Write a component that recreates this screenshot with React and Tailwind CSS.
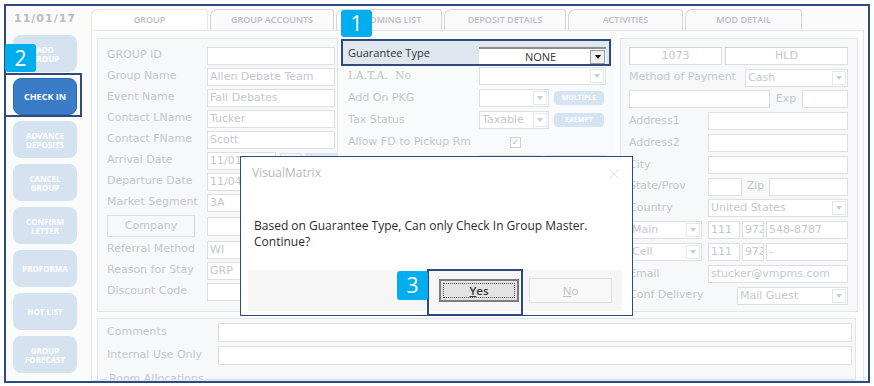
import React from "react";

const TXT = "text-[#c4c7cb]";

function Tri({ dark }) {
  return (
    <span
      className={`w-0 h-0 border-l-[3px] border-r-[3px] border-t-[4px] border-l-transparent border-r-transparent ${
        dark ? "border-t-[#111]" : "border-t-[#c9ccd0]"
      }`}
    />
  );
}

function Inp({ className = "", children, center }) {
  return (
    <div
      className={`h-[18px] shrink-0 bg-white border border-[#dcdfe3] ${TXT} text-[11px] leading-[16px] px-[2px] overflow-hidden whitespace-nowrap ${
        center ? "text-center" : ""
      } ${className}`}
    >
      {children}
    </div>
  );
}

function Sel({ className = "", children }) {
  return (
    <div className={`h-[18px] shrink-0 bg-white border border-[#dcdfe3] flex ${className}`}>
      <span className={`flex-1 px-[2px] text-[11px] leading-[16px] ${TXT} overflow-hidden whitespace-nowrap`}>
        {children}
      </span>
      <span className="w-[14px] my-[1px] mr-[1px] border border-[#e6e8eb] flex items-center justify-center">
        <Tri />
      </span>
    </div>
  );
}

function Pill({ children }) {
  return (
    <div className="ml-[5px] w-[50px] h-[14px] rounded-[4px] bg-[#d5e4f3] text-white text-[7px] font-bold font-['Open_Sans',sans-serif] flex items-center justify-center">
      {children}
    </div>
  );
}

function Label({ className = "", children }) {
  return <div className={`shrink-0 ${TXT} text-[11px] whitespace-nowrap ${className}`}>{children}</div>;
}

function SideBtn({ children, active }) {
  return (
    <div
      className={`w-[64px] h-[37px] rounded-[8px] flex items-center justify-center text-center text-white font-bold text-[8px] leading-[9px] font-['Open_Sans',sans-serif] ${
        active ? "bg-[#3b7cc7] border border-[#2f68ad] text-[9px]" : "bg-[#d5e3f1]"
      }`}
    >
      {children}
    </div>
  );
}

function Tab({ children, className = "", active }) {
  return (
    <div
      className={`h-[21px] shrink-0 rounded-tl-[7px] rounded-tr-[3px] border border-b-0 flex items-center justify-center text-[9px] font-semibold text-[#b9bdc4] font-['Open_Sans',sans-serif] ${
        active ? "bg-white border-[#eee7d2]" : "bg-[#fafafa] border-[#d9d9d3]"
      } ${className}`}
    >
      {children}
    </div>
  );
}

function Badge({ n, className }) {
  return (
    <div
      className={`absolute rounded-[3px] bg-[#00aeef] text-white text-[21px] leading-none flex items-center justify-center font-['Open_Sans',sans-serif] ${className}`}
    >
      {n}
    </div>
  );
}

export default function App() {
  const leftRows = [
    ["GROUP ID", ""],
    ["Group Name", "Allen Debate Team"],
    ["Event Name", "Fall Debates"],
    ["Contact LName", "Tucker"],
    ["Contact FName", "Scott"],
  ];
  return (
    <div className="relative w-[874px] h-[386px] bg-white pl-[4px] pt-[4px] pr-[4px] pb-[3px] font-['DejaVu_Sans',sans-serif] overflow-hidden">
      <div className="h-full border-2 border-[#2e4a7e] bg-[#fbfbfb] flex">
        {/* Sidebar */}
        <div className="w-[82px] shrink-0 pl-[7px] pt-[6px] flex flex-col">
          <div className="w-[64px] h-[14px] text-center text-[11px] leading-[14px] font-bold tracking-[1px] text-[#b7bcc5] font-['DejaVu_Sans',sans-serif]">
            11/01/17
          </div>
          <div className="mt-[9px] flex flex-col gap-[6px]">
            <SideBtn>ADD<br />GROUP</SideBtn>
            <SideBtn active>CHECK IN</SideBtn>
            <SideBtn>ADVANCE<br />DEPOSITS</SideBtn>
            <SideBtn>CANCEL<br />GROUP</SideBtn>
            <SideBtn>CONFIRM<br />LETTER</SideBtn>
            <SideBtn>PROFORMA</SideBtn>
            <SideBtn>HOT LIST</SideBtn>
            <SideBtn>GROUP<br />FORECAST</SideBtn>
          </div>
        </div>

        {/* Main */}
        <div className="flex-1 min-w-0 flex flex-col pl-[3px] pr-[4px] pt-[3px]">
          <div className="h-[21px] flex gap-[2px] shrink-0">
            <Tab active className="w-[117px]">GROUP</Tab>
            <Tab className="w-[124px]">GROUP ACCOUNTS</Tab>
            <Tab className="w-[106px]">ROOMING LIST</Tab>
            <Tab className="w-[122px]">DEPOSIT DETAILS</Tab>
            <Tab className="w-[115px]">ACTIVITIES</Tab>
            <Tab className="w-[117px]">MOD DETAIL</Tab>
          </div>
          <div className="flex-1 min-h-0 overflow-hidden border border-[#e2e5e9] bg-[#fbfcfd] pl-[5px] pr-[3px] pt-[7px]">
            <div className="h-[274px] flex">
              {/* Left box */}
              <div className="w-[241px] shrink-0 border border-[#e1e4e8] bg-[#f6f8fa] pl-[9px] pt-[6px] overflow-hidden">
                {leftRows.map(([l, v]) => (
                  <div key={l} className="h-[21px] flex items-center">
                    <Label className="w-[100px]">{l}</Label>
                    <Inp className="w-[128px]">{v}</Inp>
                  </div>
                ))}
                <div className="h-[21px] flex items-center">
                  <Label className="w-[100px]">Arrival Date</Label>
                  <Inp className="w-[69px]">11/01/17</Inp>
                  <div className="ml-[4px] w-[22px] h-[16px] border border-[#dcdfe3] bg-[#f4f5f6]" />
                  <div className="ml-[3px] w-[32px] h-[16px] bg-[#d8e6f3]" />
                </div>
                <div className="h-[21px] flex items-center">
                  <Label className="w-[100px]">Departure Date</Label>
                  <Inp className="w-[69px]">11/04/17</Inp>
                </div>
                <div className="h-[21px] flex items-center">
                  <Label className="w-[100px]">Market Segment</Label>
                  <Inp className="w-[128px]">3A</Inp>
                </div>
                <div className="h-[26px] flex items-center">
                  <div className={`w-[88px] h-[22px] border border-[#dcdfe3] border-r-[#cfd2d6] bg-[#f7f8f9] ${TXT} text-[11px] flex items-center justify-center`}>
                    Company
                  </div>
                  <Inp className="ml-[12px] w-[128px] h-[19px]"></Inp>
                </div>
                <div className="h-[21px] flex items-center">
                  <Label className="w-[100px]">Referral Method</Label>
                  <Inp className="w-[128px]">WI</Inp>
                </div>
                <div className="h-[21px] flex items-center">
                  <Label className="w-[100px]">Reason for Stay</Label>
                  <Inp className="w-[128px]">GRP</Inp>
                </div>
                <div className="h-[21px] flex items-center">
                  <Label className="w-[100px]">Discount Code</Label>
                  <Inp className="w-[128px]"></Inp>
                </div>
              </div>

              {/* Middle */}
              <div className="ml-[4px] w-[272px] shrink-0 bg-[#f8fafc] pt-[3px]">
                <div className="h-[24px] w-[267px] bg-[#e1e7ef] flex items-end">
                  <div className="self-center pl-[6px] w-[137px] text-[11px] text-[#333] font-['Open_Sans',sans-serif]">
                    Guarantee Type
                  </div>
                  <div className="w-[127px] h-[18px] bg-white border-t-2 border-[#8d8d8d] flex">
                    <span className="flex-1 text-center text-[11px] leading-[16px] text-[#333] font-['Open_Sans',sans-serif] pl-[12px]">
                      NONE
                    </span>
                    <span className="w-[15px] h-[14px] mt-[1px] mr-[1px] border border-[#9a9a9a] bg-[#efefef] flex items-center justify-center">
                      <Tri dark />
                    </span>
                  </div>
                </div>
                <div className="pl-[6px]">
                  <div className="h-[22px] flex items-center">
                    <Label className="w-[131px] font-['DejaVu_Serif',serif]">I.A.T.A.&nbsp; No</Label>
                    <Sel className="w-[127px]" />
                  </div>
                  <div className="h-[22px] flex items-center">
                    <Label className="w-[131px]">Add On PKG</Label>
                    <Sel className="w-[70px]" />
                    <Pill>MULTIPLE</Pill>
                  </div>
                  <div className="h-[22px] flex items-center">
                    <Label className="w-[131px]">Tax Status</Label>
                    <Sel className="w-[70px]">Taxable</Sel>
                    <Pill>EXEMPT</Pill>
                  </div>
                  <div className="h-[22px] flex items-center">
                    <Label className="w-[162px]">Allow FD to Pickup Rm</Label>
                    <div className="w-[11px] h-[11px] border border-[#cfd2d6] bg-white text-[9px] leading-[9px] text-[#b8bbbf] flex items-center justify-center">
                      ✓
                    </div>
                  </div>
                  <div className="h-[22px] flex items-center">
                    <div className="w-[131px]" />
                    <Inp className="w-[62px]"></Inp>
                    <Inp className="ml-[4px] w-[62px]"></Inp>
                  </div>
                </div>
              </div>

              {/* Right box */}
              <div className="ml-[6px] w-[238px] shrink-0 border border-[#e1e4e8] bg-[#f6f8fa] pl-[8px] pr-[9px] pt-[6px]">
                <div className="h-[21.8px] flex items-center gap-[3px]">
                  <Inp center className="w-[93px] border-t-[#cfd2d6] border-l-[#cfd2d6]">1073</Inp>
                  <Inp center className="w-[123px] border-t-[#cfd2d6] border-l-[#cfd2d6]">HLD</Inp>
                </div>
                <div className="h-[21.8px] flex items-center justify-between">
                  <Label>Method of Payment</Label>
                  <Sel className="w-[103px]">Cash</Sel>
                </div>
                <div className="h-[21.8px] flex items-center">
                  <Inp className="w-[141px]"></Inp>
                  <Label className="w-[32px] text-center">Exp</Label>
                  <Inp className="w-[46px]"></Inp>
                </div>
                {["Address1", "Address2", "City"].map((l) => (
                  <div key={l} className="h-[21.8px] flex items-center justify-between">
                    <Label>{l}</Label>
                    <Inp className="w-[140px]"></Inp>
                  </div>
                ))}
                <div className="h-[21.8px] flex items-center">
                  <Label className="w-[79px]">State/Prov</Label>
                  <Inp className="w-[34px]"></Inp>
                  <Label className="w-[27px] text-center">Zip</Label>
                  <Inp className="w-[79px]"></Inp>
                </div>
                <div className="h-[21.8px] flex items-center justify-between">
                  <Label>Country</Label>
                  <Sel className="w-[140px]">United States</Sel>
                </div>
                {[["Main", "548-8787"], ["Cell", "-"]].map(([t, n]) => (
                  <div key={t} className="h-[21.8px] flex items-center">
                    <Sel className="w-[73px]">{t}</Sel>
                    <Inp className="ml-[6px] w-[32px] text-[10.5px]">111</Inp>
                    <Inp className="ml-[2px] w-[22px] px-[1px] text-[10px] tracking-[-0.3px]">972</Inp>
                    <Inp className="ml-[2px] w-[82px] text-[10.5px]">{n}</Inp>
                  </div>
                ))}
                <div className="h-[21.8px] flex items-center justify-between">
                  <Label>Email</Label>
                  <Inp className="w-[140px]">stucker@vmpms.com</Inp>
                </div>
                <div className="h-[21.8px] flex items-center justify-between">
                  <Label>Conf Delivery</Label>
                  <Sel className="w-[111px]">Mail Guest</Sel>
                </div>
              </div>
            </div>

            {/* Bottom box */}
            <div className="mt-[6px] w-[759px] border border-[#e1e4e8] bg-[#f6f8fa] pl-[9px] pt-[2px]">
              <div className="h-[23px] flex items-center">
                <Label className="w-[111px]">Comments</Label>
                <Inp className="w-[634px] h-[19px]"></Inp>
              </div>
              <div className="h-[23px] flex items-center">
                <Label className="w-[111px]">Internal Use Only</Label>
                <Inp className="w-[634px] h-[19px]"></Inp>
              </div>
              <div className="mt-[4px] ml-[-7px] flex items-start">
                <div className="w-[7px] mt-[8px] border-t border-[#dadde1]" />
                <Label className="px-[2px]">Room Allocations</Label>
                <div className="flex-1 mt-[8px] border-t border-[#dadde1]" />
              </div>
            </div>
          </div>
        </div>
      </div>

      {/* Dialog */}
      <div className="absolute left-[240px] top-[156px] w-[393px] h-[160px] border-[1.5px] border-[#2e4a7e] bg-white flex flex-col font-['Open_Sans',sans-serif]">
        <div className="pl-[11px] pt-[8px] h-[26px] text-[12px] leading-[16px] text-[#b8b8b8]">VisualMatrix</div>
        <svg className="absolute right-[12px] top-[11px]" width="12" height="12" viewBox="0 0 12 12">
          <path d="M1 1L11 11M11 1L1 11" stroke="#e2e2e2" strokeWidth="1" />
        </svg>
        <div className="pl-[13px] mt-[35px] text-[12px] leading-[16px] text-[#2b2b2b]">
          Based on Guarantee Type, Can only Check In Group Master.
          <br />
          Continue?
        </div>
        <div className="mt-auto ml-[7px] mr-[10px] mb-[4px] h-[41px] bg-[#f6f6f6] flex items-center justify-end pr-[10px] gap-[10px]">
          <div className="w-[80px] h-[23px] border-2 border-[#7c7c7c] bg-[#e3e3e3] p-[2px]">
            <div className="w-full h-full border border-dotted border-[#555] flex items-center justify-center text-[11.5px] font-semibold text-[#3a3a3a]">
              <span><span className="underline">Y</span>es</span>
            </div>
          </div>
          <div className="w-[83px] h-[25px] border border-[#dedede] bg-[#f8f8f8] flex items-center justify-center text-[11.5px] text-[#c2c2c2]">
            <span><span className="underline">N</span>o</span>
          </div>
        </div>
      </div>

      {/* Highlight boxes & badges */}
      <div className="absolute left-[4px] top-[73px] w-[78px] h-[44px] border-2 border-[#2e4a7e]" />
      <Badge n="2" className="left-[5px] top-[44px] w-[31px] h-[28px]" />

      <div className="absolute left-[341px] top-[39px] w-[270px] h-[27px] border-2 border-[#2e4a7e]" />
      <Badge n="1" className="left-[341px] top-[10px] w-[31px] h-[27px]" />

      <div className="absolute left-[427px] top-[269px] w-[96px] h-[47px] border-2 border-[#2e4a7e]" />
      <Badge n="3" className="left-[397px] top-[271px] w-[31px] h-[29px]" />
    </div>
  );
}
